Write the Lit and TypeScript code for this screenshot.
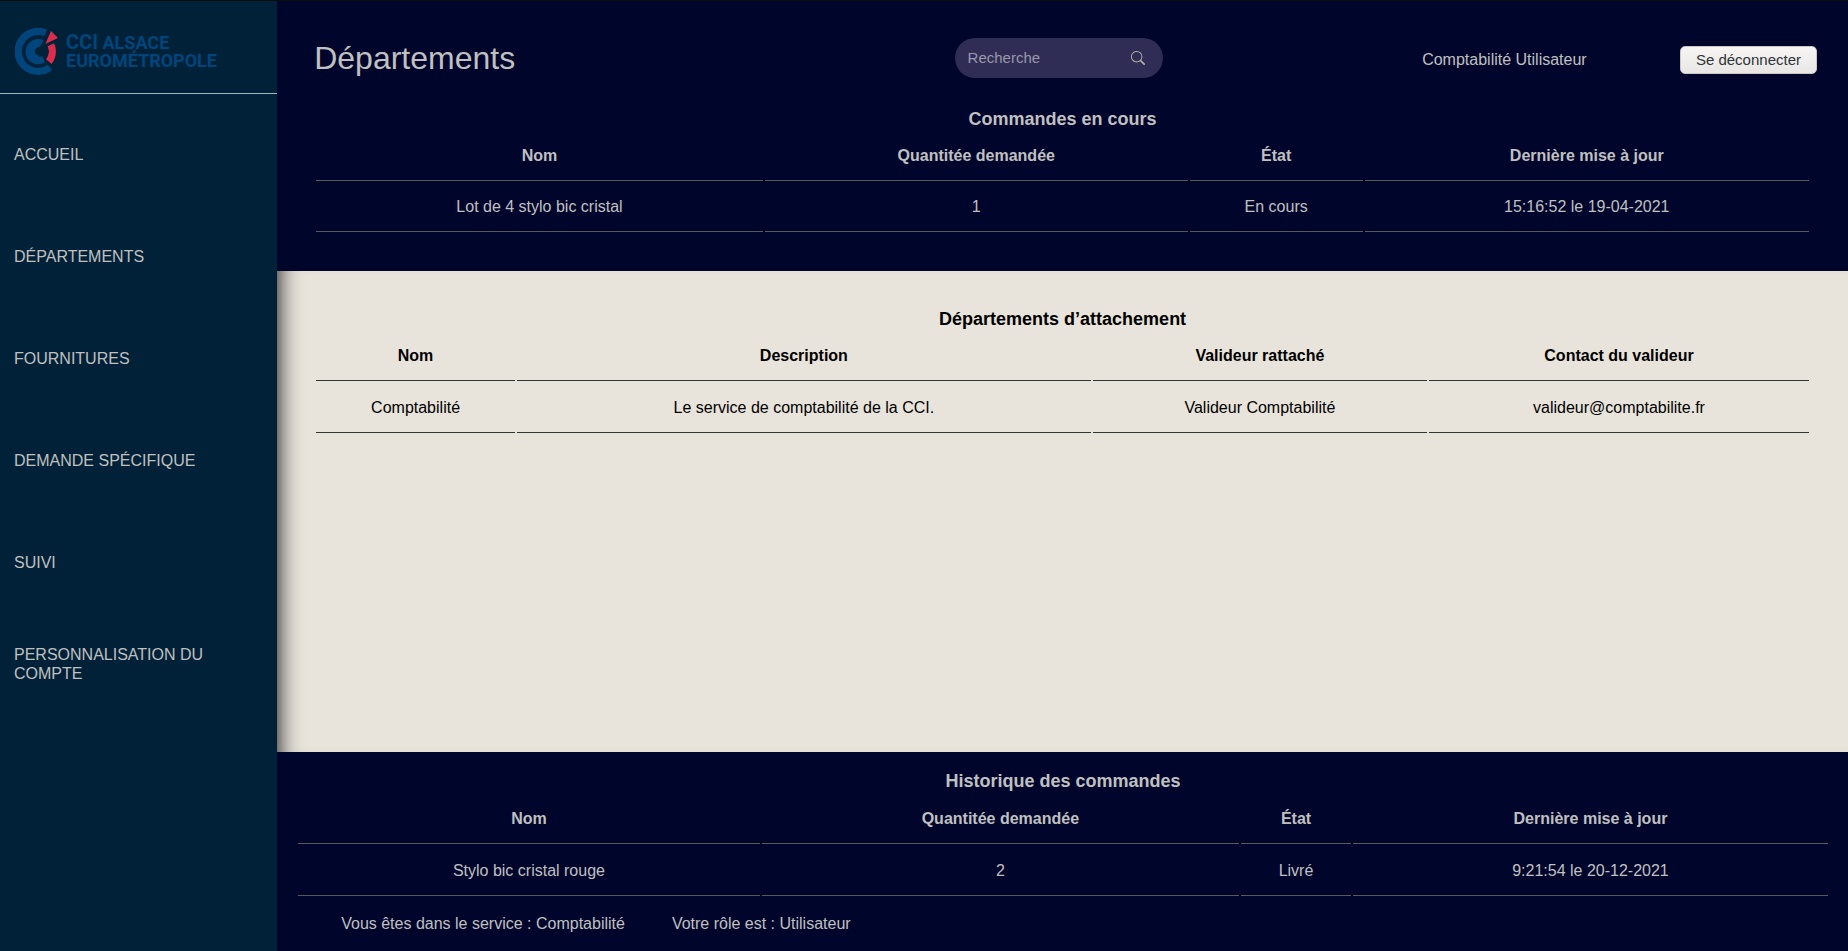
import { LitElement, html, css } from "lit";
import { customElement, property } from "lit/decorators.js";

@customElement("data-table")
class DataTable extends LitElement {
  @property() heading = "";
  @property({ attribute: false }) columns: string[] = [];
  @property({ attribute: false }) rows: string[][] = [];

  static styles = css`
    :host {
      display: block;
      --line: #5a5957;
    }
    .title {
      margin: 0 0 var(--title-gap, 15px);
      font-size: 18px;
      line-height: 22px;
      font-weight: 700;
      text-align: center;
    }
    .table {
      width: 100%;
      border-spacing: 2px;
      font-size: 16px;
      line-height: 18px;
      text-align: center;
    }
    .head,
    .cell {
      border-bottom: 1px solid var(--line);
    }
    .head {
      padding: 0 1px 15px;
    }
    .cell {
      padding: var(--cell-top, 16px) 1px 15px;
    }
  `;

  render() {
    return html`
      <h2 class="title" id="title">${this.heading}</h2>
      <table class="table" aria-labelledby="title">
        <thead>
          <tr>
            ${this.columns.map((c) => html`<th class="head" scope="col">${c}</th>`)}
          </tr>
        </thead>
        <tbody>
          ${this.rows.map(
            (r) => html`<tr>${r.map((c) => html`<td class="cell">${c}</td>`)}</tr>`
          )}
        </tbody>
      </table>
    `;
  }
}

@customElement("app-root")
class AppRoot extends LitElement {
  static styles = css`
    * {
      box-sizing: border-box;
    }
    :host {
      box-sizing: border-box;
      display: grid;
      grid-template-columns: 15% 1fr;
      min-height: 100vh;
      border-top: 1px solid #0c0c0c;
      background: #00052b;
      color: #c0c0c0;
      font-family: "Liberation Sans", Arial, sans-serif;
      font-size: 16px;
      line-height: 18px;
    }
    .sidebar {
      background: #002137;
    }
    .logo {
      display: flex;
      align-items: center;
      gap: 8px;
      padding: 27px 15px 18px;
      border-bottom: 1px solid #9fb8bd;
      color: #00457c;
      text-decoration: none;
      font-family: Roboto, sans-serif;
      font-size: 18px;
      line-height: 18px;
      font-weight: 700;
    }
    .mark {
      width: 43px;
      height: 47px;
      flex: none;
    }
    .brand {
      display: flex;
      flex-direction: column;
    }
    .cci {
      font-size: 20px;
    }
    .nav {
      padding-top: 9px;
    }
    .menu {
      margin: 0;
      padding: 0;
      list-style: none;
    }
    .link {
      display: flex;
      align-items: center;
      min-height: 102px;
      padding: 0 14px;
      color: inherit;
      text-decoration: none;
      line-height: 19px;
    }
    .main {
      display: flex;
      flex-direction: column;
      min-width: 0;
    }
    .header {
      display: grid;
      grid-template-columns: 230fr 283fr 162fr 75fr;
      grid-auto-rows: 44px;
      align-items: center;
      padding: 37px 31px 26px 37px;
    }
    .page-title {
      align-self: start;
      margin: 0;
      font-size: 32px;
      line-height: 40px;
      font-weight: 400;
    }
    .search {
      align-self: start;
      justify-self: center;
      display: flex;
      align-items: center;
      width: 208px;
      height: 40px;
      padding: 0 18px 0 13px;
      border-radius: 20px;
      background: #2f2d55;
    }
    .field {
      flex: 1;
      min-width: 0;
      padding: 0;
      border: 0;
      outline: 0;
      background: none;
      color: inherit;
      font: inherit;
      font-size: 15px;
    }
    .field::placeholder {
      color: #9a98a9;
      opacity: 1;
    }
    .go {
      display: flex;
      padding: 0;
      border: 0;
      background: none;
      color: #b3b2a8;
      cursor: pointer;
    }
    .glass {
      width: 14px;
      height: 14px;
    }
    .user {
      text-align: center;
    }
    .logout {
      justify-self: end;
      height: 28px;
      padding: 0 15px;
      border: 1px solid #cdc7c2;
      border-radius: 5px;
      background: linear-gradient(#f6f5f4, #e9e7e5);
      color: #2e3436;
      font: inherit;
      font-size: 15px;
      white-space: nowrap;
      cursor: pointer;
    }
    .orders {
      padding: 0 37px 37px;
      --cell-top: 15px;
    }
    .departments {
      flex: 1;
      padding: 37px;
      background: #e8e4dc;
      color: #000;
      box-shadow: inset 24px 0 24px -24px #000;
    }
    .departments data-table {
      --line: #333333;
    }
    .history {
      padding: 18px 18px 18px 19px;
      --title-gap: 16px;
    }
    .status {
      display: flex;
      gap: 47px;
      margin: 17px 0 0;
      padding-left: 45px;
    }
  `;

  private links = [
    "ACCUEIL",
    "DÉPARTEMENTS",
    "FOURNITURES",
    "DEMANDE SPÉCIFIQUE",
    "SUIVI",
    "PERSONNALISATION DU COMPTE",
  ];

  private orderColumns = ["Nom", "Quantitée demandée", "État", "Dernière mise à jour"];

  render() {
    return html`
      <aside class="sidebar">
        <a class="logo" href="#">
          <svg class="mark" viewBox="45 84 129 141" aria-hidden="true">
            <path
              fill="#00457c"
              d="M141 89A70.500 70.500 0 1 0 157 210L143 194A49 49 0 1 1 133 109Z"
            />
            <path
              fill="#00457c"
              d="M131 121A38 38 0 1 0 135 187L128 170H119L105 160L104 150L110 143L121 139Z"
            />
            <path fill="#d92d4b" d="M153 93L174 114L136 132Z" />
            <path
              fill="#d92d4b"
              d="M143 139L162 130Q168 141 168 155Q167 176 155 192L138 178L144 168L147 154Z"
            />
          </svg>
          <span class="brand">
            <span><span class="cci">CCI</span> ALSACE</span>
            <span>EUROMÉTROPOLE</span>
          </span>
        </a>
        <nav class="nav">
          <ul class="menu">
            ${this.links.map((l) => html`<li><a class="link" href="#">${l}</a></li>`)}
          </ul>
        </nav>
      </aside>
      <main class="main">
        <header class="header">
          <h1 class="page-title">Départements</h1>
          <form class="search" role="search" @submit=${(e: Event) => e.preventDefault()}>
            <input class="field" type="text" placeholder="Recherche" aria-label="Recherche" />
            <button class="go" type="submit" aria-label="Rechercher">
              <svg class="glass" viewBox="0 0 16 16" fill="currentColor" aria-hidden="true">
                <path
                  d="M11.742 10.344a6.5 6.5 0 1 0-1.397 1.398h-.001c.03.04.062.078.098.115l3.85 3.85a1 1 0 0 0 1.415-1.414l-3.85-3.85a1.007 1.007 0 0 0-.115-.1zM12 6.5a5.5 5.5 0 1 1-11 0 5.5 5.5 0 0 1 11 0z"
                />
              </svg>
            </button>
          </form>
          <span class="user">Comptabilité Utilisateur</span>
          <button class="logout" type="button">Se déconnecter</button>
        </header>
        <section class="orders">
          <data-table
            heading="Commandes en cours"
            .columns=${this.orderColumns}
            .rows=${[["Lot de 4 stylo bic cristal", "1", "En cours", "15:16:52 le 19-04-2021"]]}
          ></data-table>
        </section>
        <section class="departments">
          <data-table
            heading="Départements d’attachement"
            .columns=${["Nom", "Description", "Valideur rattaché", "Contact du valideur"]}
            .rows=${[
              [
                "Comptabilité",
                "Le service de comptabilité de la CCI.",
                "Valideur Comptabilité",
                "valideur@comptabilite.fr",
              ],
            ]}
          ></data-table>
        </section>
        <section class="history">
          <data-table
            heading="Historique des commandes"
            .columns=${this.orderColumns}
            .rows=${[["Stylo bic cristal rouge", "2", "Livré", "9:21:54 le 20-12-2021"]]}
          ></data-table>
          <p class="status">
            <span>Vous êtes dans le service : Comptabilité</span>
            <span>Votre rôle est : Utilisateur</span>
          </p>
        </section>
      </main>
    `;
  }
}
